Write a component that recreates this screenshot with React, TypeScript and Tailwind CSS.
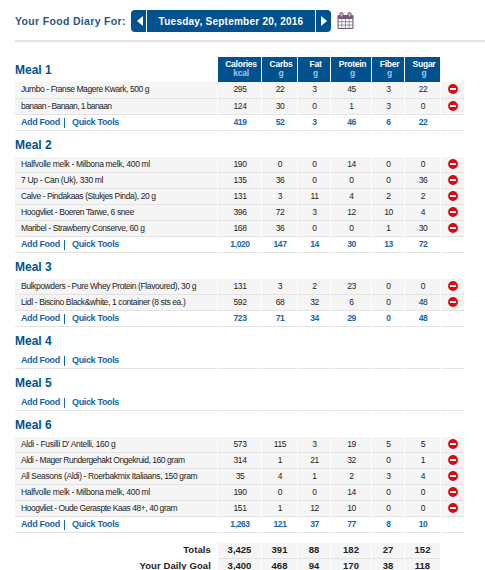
import React from "react";

const COLS = "grid grid-cols-[202px_43px_35px_32px_40px_32px_35px_23px] gap-x-px";

type Food = { name: string; track: string; values: string[] };
type Meal = { title: string; foods: Food[]; totals: string[] };

const EMPTY = ["", "", "", "", "", ""];

const meals: Meal[] = [
  {
    title: "Meal 1",
    foods: [
      { name: "Jumbo - Franse Magere Kwark, 500 g", track: "tracking-[-0.43px]", values: ["295", "22", "3", "45", "3", "22"] },
      { name: "banaan - Banaan, 1 banaan", track: "tracking-[-0.6px]", values: ["124", "30", "0", "1", "3", "0"] },
    ],
    totals: ["419", "52", "3", "46", "6", "22"],
  },
  {
    title: "Meal 2",
    foods: [
      { name: "Halfvolle melk - Milbona melk, 400 ml", track: "tracking-[-0.32px]", values: ["190", "0", "0", "14", "0", "0"] },
      { name: "7 Up - Can (Uk), 330 ml", track: "tracking-[-0.33px]", values: ["135", "36", "0", "0", "0", "36"] },
      { name: "Calve - Pindakaas (Stukjes Pinda), 20 g", track: "tracking-[-0.4px]", values: ["131", "3", "11", "4", "2", "2"] },
      { name: "Hoogvliet - Boeren Tarwe, 6 snee", track: "tracking-[-0.4px]", values: ["396", "72", "3", "12", "10", "4"] },
      { name: "Maribel - Strawberry Conserve, 60 g", track: "tracking-[-0.37px]", values: ["168", "36", "0", "0", "1", "30"] },
    ],
    totals: ["1,020", "147", "14", "30", "13", "72"],
  },
  {
    title: "Meal 3",
    foods: [
      { name: "Bulkpowders - Pure Whey Protein (Flavoured), 30 g", track: "tracking-[-0.4px]", values: ["131", "3", "2", "23", "0", "0"] },
      { name: "Lidl - Biscino Black&white, 1 container (8 sts ea.)", track: "tracking-[-0.38px]", values: ["592", "68", "32", "6", "0", "48"] },
    ],
    totals: ["723", "71", "34", "29", "0", "48"],
  },
  { title: "Meal 4", foods: [], totals: EMPTY },
  { title: "Meal 5", foods: [], totals: EMPTY },
  {
    title: "Meal 6",
    foods: [
      { name: "Aldi - Fusilli D' Antelli, 160 g", track: "tracking-[-0.32px]", values: ["573", "115", "3", "19", "5", "5"] },
      { name: "Aldi - Mager Rundergehakt Ongekruid, 160 gram", track: "tracking-[-0.45px]", values: ["314", "1", "21", "32", "0", "1"] },
      { name: "All Seasons (Aldi) - Roerbakmix Italiaans, 150 gram", track: "tracking-[-0.36px]", values: ["35", "4", "1", "2", "3", "4"] },
      { name: "Halfvolle melk - Milbona melk, 400 ml", track: "tracking-[-0.32px]", values: ["190", "0", "0", "14", "0", "0"] },
      { name: "Hoogvliet - Oude Geraspte Kaas 48+, 40 gram", track: "tracking-[-0.45px]", values: ["151", "1", "12", "10", "0", "0"] },
    ],
    totals: ["1,263", "121", "37", "77", "8", "10"],
  },
];

const headers = [
  ["Calories", "kcal"],
  ["Carbs", "g"],
  ["Fat", "g"],
  ["Protein", "g"],
  ["Fiber", "g"],
  ["Sugar", "g"],
];

const summary = [
  { label: "Totals", values: ["3,425", "391", "88", "182", "27", "152"] },
  { label: "Your Daily Goal", values: ["3,400", "468", "94", "170", "38", "118"] },
];

function RemoveIcon() {
  return (
    <svg width="10" height="10" viewBox="0 0 10 10">
      <circle cx="5" cy="5" r="4.9" fill="#e30508" />
      <rect x="2" y="4" width="6" height="2" fill="#fff" />
    </svg>
  );
}

function CalendarIcon() {
  return (
    <svg width="17" height="18" viewBox="0 0 17 18" className="ml-1.5">
      <rect x="0.5" y="3" width="16" height="14" rx="1" fill="#75597a" />
      <rect x="3" y="0.5" width="3" height="4.5" rx="1.2" fill="#c9b6b4" stroke="#75597a" strokeWidth="1" />
      <rect x="11" y="0.5" width="3" height="4.5" rx="1.2" fill="#c9b6b4" stroke="#75597a" strokeWidth="1" />
      {[7, 10.2, 13.4].map((y) =>
        [1.6, 5.2, 8.8, 12.4].map((x) => (
          <rect key={`${x}-${y}`} x={x} y={y} width="3" height="2.5" fill="#fff" />
        )),
      )}
    </svg>
  );
}

function FoodRow({ food, tall }: { food: Food; tall: boolean }) {
  const cell = "border-b border-[#e3e3e3] bg-[#f5f5f5]";
  return (
    <div className={`${COLS} ${tall ? "h-[17px]" : "h-4"} text-[8.5px] leading-[14px] text-[#222]`}>
      <div className={`${cell} whitespace-nowrap pl-1.5 ${food.track}`}>{food.name}</div>
      {food.values.map((v, i) => (
        <div key={i} className={`${cell} pl-px text-center tracking-[-0.4px]`}>{v}</div>
      ))}
      <div className={`${cell} flex items-start justify-center pt-[2px]`}>
        <RemoveIcon />
      </div>
    </div>
  );
}

function MealTotals({ totals }: { totals: string[] }) {
  const cell = "border-b border-[#e3e3e3]";
  return (
    <div className={`${COLS} h-4 font-bold text-[#1467ac]`}>
      <div className={`${cell} flex items-center whitespace-nowrap pl-1.5 text-[9px] leading-[15px]`}>
        <a className="w-[38px] tracking-[-0.4px]">Add Food</a>
        <span className="ml-[5px] h-[10px] w-px bg-[#1467ac]" />
        <a className="ml-[7px] tracking-[-0.35px]">Quick Tools</a>
      </div>
      {totals.map((v, i) => (
        <div key={i} className={`${cell} pl-px text-center text-[8.5px] leading-[15px] tracking-[-0.4px]`}>{v}</div>
      ))}
      <div className={cell} />
    </div>
  );
}

export default function App() {
  return (
    <div className="h-[570px] w-[485px] overflow-hidden bg-white pl-[15px] font-['Liberation_Sans',Arial,sans-serif]">
      <header className="flex h-[42px] items-center border-b-2 border-[#e3e3e3] pt-[2px]">
        <h1 className="w-[116px] whitespace-nowrap pt-px text-[10.5px] font-bold tracking-[0.33px] text-[#2b5580]">Your Food Diary For:</h1>
        <div className="flex h-[22px] gap-px overflow-hidden rounded text-white">
          <button className="flex w-[15px] items-center justify-center bg-[#00528f] pl-[2px]">
            <svg width="6" height="10" viewBox="0 0 6 10"><path d="M6 0v10L0 5z" fill="#fff" /></svg>
          </button>
          <div className="w-[168px] whitespace-nowrap bg-[#00528f] text-center text-[10px] font-bold leading-[24px] tracking-[0.25px]">Tuesday, September 20, 2016</div>
          <button className="flex w-[15px] items-center justify-center bg-[#00528f]">
            <svg width="6" height="10" viewBox="0 0 6 10"><path d="M0 0v10l6-5z" fill="#fff" /></svg>
          </button>
        </div>
        <CalendarIcon />
      </header>

      <main className="pt-[15px]">
        {meals.map((meal, m) => (
          <section key={meal.title}>
            {m === 0 ? (
              <div className={`${COLS} h-[25px]`}>
                <h2 className="text-[12px] font-bold leading-[26px] text-[#00528f]">{meal.title}</h2>
                {headers.map(([name, unit]) => (
                  <div key={name} className="bg-[#00528f] pl-[3px] pt-[3px] text-center text-[8.5px] font-bold leading-[9px] tracking-[-0.25px] text-white">
                    <div>{name}</div>
                    <div className="text-[#9fc4ea]">{unit}</div>
                  </div>
                ))}
              </div>
            ) : (
              <h2 className="h-[26px] text-[12px] font-bold leading-[28px] text-[#00528f]">{meal.title}</h2>
            )}
            {meal.foods.map((food, i) => (
              <FoodRow key={food.name} food={food} tall={m === 0 && i === 0} />
            ))}
            <MealTotals totals={meal.totals} />
          </section>
        ))}

        <footer className="mt-2.5">
          {summary.map((row) => (
            <div key={row.label} className={`${COLS} h-4 text-[9.5px] font-bold leading-[14px] text-[#222]`}>
              <div className="pr-1.5 text-right tracking-[0.1px]">{row.label}</div>
              {row.values.map((v, i) => (
                <div key={i} className="border-b border-[#e3e3e3] bg-[#f5f5f5] text-center">{v}</div>
              ))}
            </div>
          ))}
        </footer>
      </main>
    </div>
  );
}
